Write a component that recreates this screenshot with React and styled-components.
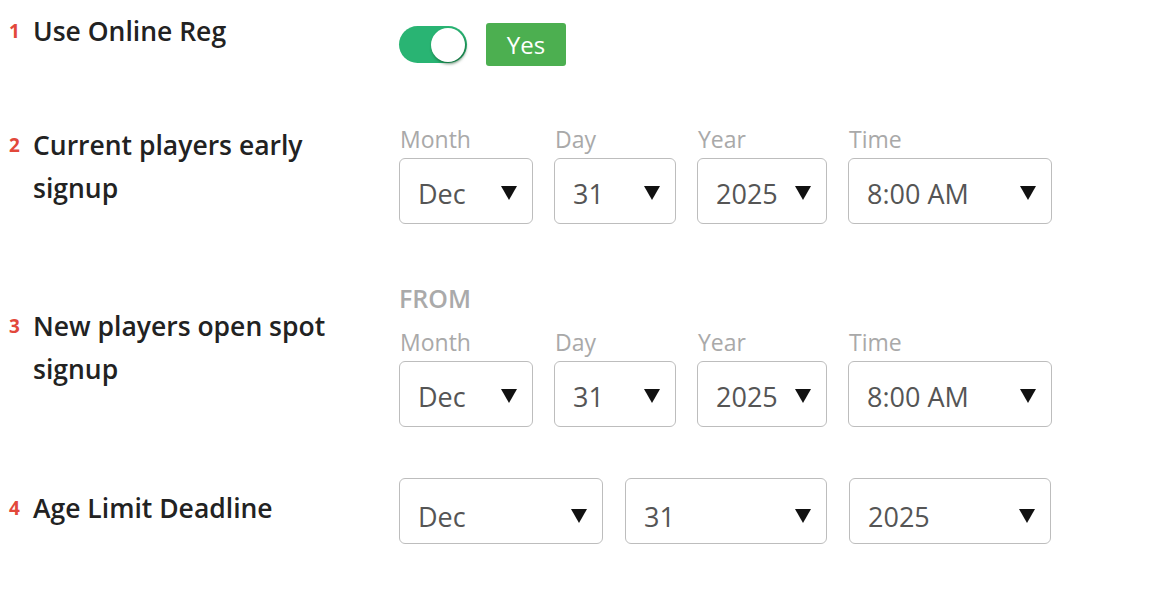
import React, { useState } from 'react';
import styled, { createGlobalStyle } from 'styled-components';

const GlobalStyle = createGlobalStyle`
  body {
    margin: 0;
    background: #fff;
    font-family: 'Open Sans', 'Noto Sans', sans-serif;
  }
`;

const Page = styled.div`
  padding-top: 10px;
  display: flex;
  flex-direction: column;
`;

const Row = styled.div`
  display: flex;
  align-items: flex-start;
  margin-top: ${props => props.gap || 0}px;
`;

const Num = styled.div`
  width: 24px;
  padding-left: 9px;
  box-sizing: content-box;
  font-size: 19px;
  font-weight: 700;
  line-height: 43px;
  color: #e2483b;
  margin-top: ${props => props.offset || 0}px;
`;

const Label = styled.div`
  width: 318px;
  margin-right: 48px;
  font-size: 26.5px;
  font-weight: 600;
  line-height: 43px;
  color: #222;
  margin-top: ${props => props.offset || 0}px;
`;

const Controls = styled.div`
  display: flex;
  flex-direction: column;
  padding-top: ${props => props.pad || 0}px;
`;

const Inline = styled.div`
  display: flex;
  align-items: center;
  gap: ${props => props.gap || 21}px;
`;

const Track = styled.button`
  width: 68px;
  height: 37px;
  border: none;
  border-radius: 19px;
  background: ${props => (props.on ? '#29b473' : '#ccc')};
  padding: 0 2px;
  display: flex;
  align-items: center;
  justify-content: ${props => (props.on ? 'flex-end' : 'flex-start')};
  cursor: pointer;
`;

const Knob = styled.span`
  width: 34px;
  height: 34px;
  border-radius: 50%;
  background: #fff;
  box-shadow: 1px 2px 3px rgba(0, 60, 20, 0.55);
`;

const Badge = styled.span`
  width: 80px;
  height: 43px;
  border-radius: 3px;
  background: #4caf50;
  color: #fff;
  font-size: 24px;
  display: flex;
  align-items: center;
  justify-content: center;
`;

const Heading = styled.div`
  font-size: 25px;
  font-weight: 600;
  line-height: 30px;
  color: #aaa;
  margin-bottom: 14px;
`;

const Field = styled.div`
  display: flex;
  flex-direction: column;
  width: ${props => props.w}px;
`;

const FieldLabel = styled.div`
  font-size: 23px;
  line-height: 30px;
  color: #a9a9a9;
  padding-left: 1px;
  margin-bottom: 4px;
`;

const Select = styled.div`
  height: 66px;
  box-sizing: border-box;
  border: 1px solid #bdbdbd;
  border-radius: 6px;
  display: flex;
  align-items: center;
  justify-content: space-between;
  padding: ${props => (props.low ? '10px' : '4px')} 15px 0 18px;
  font-size: 27px;
  color: #555;
  cursor: pointer;
`;

const Arrow = () => (
  <svg width="16" height="14" viewBox="0 0 16 14">
    <polygon points="0,0 16,0 8,14" fill="#111" />
  </svg>
);

const DateFields = ({ widths }) => (
  <Inline gap={21}>
    <Field w={widths[0]}>
      <FieldLabel>Month</FieldLabel>
      <Select>Dec<Arrow /></Select>
    </Field>
    <Field w={widths[1]}>
      <FieldLabel>Day</FieldLabel>
      <Select>31<Arrow /></Select>
    </Field>
    <Field w={widths[2]}>
      <FieldLabel>Year</FieldLabel>
      <Select>2025<Arrow /></Select>
    </Field>
    <Field w={widths[3]}>
      <FieldLabel>Time</FieldLabel>
      <Select>8:00 AM<Arrow /></Select>
    </Field>
  </Inline>
);

const App = () => {
  const [online, setOnline] = useState(true);
  const widths = [134, 122, 130, 204];

  return (
    <Page>
      <GlobalStyle />
      <Row>
        <Num>1</Num>
        <Label>Use Online Reg</Label>
        <Controls pad={13}>
          <Inline gap={19}>
            <Track on={online} onClick={() => setOnline(!online)}>
              <Knob />
            </Track>
            <Badge>{online ? 'Yes' : 'No'}</Badge>
          </Inline>
        </Controls>
      </Row>

      <Row gap={58}>
        <Num>2</Num>
        <Label>Current players early signup</Label>
        <Controls>
          <DateFields widths={widths} />
        </Controls>
      </Row>

      <Row gap={59}>
        <Num offset={22}>3</Num>
        <Label offset={22}>New players open spot signup</Label>
        <Controls>
          <Heading>FROM</Heading>
          <DateFields widths={widths} />
        </Controls>
      </Row>

      <Row gap={51}>
        <Num offset={9}>4</Num>
        <Label offset={9}>Age Limit Deadline</Label>
        <Controls>
          <Inline gap={22}>
            <Field w={204}>
              <Select low>Dec<Arrow /></Select>
            </Field>
            <Field w={202}>
              <Select low>31<Arrow /></Select>
            </Field>
            <Field w={202}>
              <Select low>2025<Arrow /></Select>
            </Field>
          </Inline>
        </Controls>
      </Row>
    </Page>
  );
};

export default App;
